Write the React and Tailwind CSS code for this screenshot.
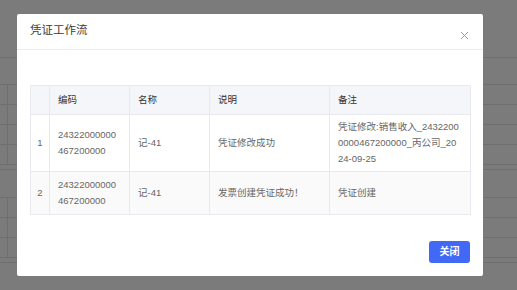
import React from "react";

const font = { fontFamily: '"Liberation Sans", "Noto Sans CJK SC", sans-serif' };

function BgRow({ h, split }) {
  return (
    <div className={`flex border-t border-[#6f6f72] ${h}`}>
      {split ? <div className="w-[8px] border-r border-[#6f6f72]" /> : null}
    </div>
  );
}

export default function App() {
  return (
    <div className="relative w-[517px] h-[290px] overflow-hidden bg-[#7b7b7b]" style={font}>
      {/* underlying page (dimmed) */}
      <div className="flex flex-col">
        <div className="h-[57px]" />
        <BgRow h="h-[27px]" />
        <BgRow h="h-[20px]" split />
        <BgRow h="h-[20px]" split />
        <BgRow h="h-[20px]" split />
        <BgRow h="h-[20px]" split />
        <BgRow h="h-[5px]" />
        <BgRow h="h-[28px]" />
        <BgRow h="h-[20px]" split />
        <BgRow h="h-[20px]" split />
        <BgRow h="h-[20px]" split />
        <BgRow h="h-[5px]" />
        <BgRow h="h-[28px]" />
      </div>

      {/* modal */}
      <div className="absolute left-[17px] top-[14px] w-[466px] h-[262px] bg-white rounded-[2px] flex flex-col">
        <div className="h-[36px] shrink-0 border-b border-[#ebecf2] flex items-center justify-between pl-[13px] pr-[13px]">
          <span className="text-[11.5px] text-[#3a3a3a] leading-none -mt-[1px]">凭证工作流</span>
          <svg width="9" height="9" viewBox="0 0 9 9" className="mt-[8px] mr-[1px]">
            <path d="M1 1 L8 8 M8 1 L1 8" stroke="#9a9aa0" strokeWidth="1" />
          </svg>
        </div>
        <div className="px-[13px] pt-[35px]">
          <table className="table-fixed border-collapse w-[440px] text-[9.5px] leading-[16px]">
            <colgroup>
              <col className="w-[19px]" />
              <col className="w-[80px]" />
              <col className="w-[80px]" />
              <col className="w-[120px]" />
              <col className="w-[141px]" />
            </colgroup>
            <thead>
              <tr className="bg-[#f5f6fa] h-[29px] text-[#333]">
                <th className="border border-[#e8eaf0]" />
                <th className="border border-[#e8eaf0] text-left font-normal px-[8px]">编码</th>
                <th className="border border-[#e8eaf0] text-left font-normal px-[8px]">名称</th>
                <th className="border border-[#e8eaf0] text-left font-normal px-[8px]">说明</th>
                <th className="border border-[#e8eaf0] text-left font-normal px-[8px]">备注</th>
              </tr>
            </thead>
            <tbody className="text-[#666]">
              <tr className="h-[57px]">
                <td className="border border-[#e8eaf0] text-center">1</td>
                <td className="border border-[#e8eaf0] px-[8px] whitespace-nowrap">
                  <div>24322000000</div>
                  <div>467200000</div>
                </td>
                <td className="border border-[#e8eaf0] px-[8px]">记-41</td>
                <td className="border border-[#e8eaf0] px-[8px]">凭证修改成功</td>
                <td className="border border-[#e8eaf0] px-[8px] py-[4px] whitespace-nowrap">
                  <div>凭证修改:销售收入_2432200</div>
                  <div>0000467200000_丙公司_20</div>
                  <div>24-09-25</div>
                </td>
              </tr>
              <tr className="h-[43px] bg-[#fafafa]">
                <td className="border border-[#e8eaf0] text-center">2</td>
                <td className="border border-[#e8eaf0] px-[8px] whitespace-nowrap">
                  <div>24322000000</div>
                  <div>467200000</div>
                </td>
                <td className="border border-[#e8eaf0] px-[8px]">记-41</td>
                <td className="border border-[#e8eaf0] px-[8px]">发票创建凭证成功！</td>
                <td className="border border-[#e8eaf0] px-[8px]">凭证创建</td>
              </tr>
            </tbody>
          </table>
        </div>
        <div className="flex justify-end px-[13px] pt-[26px]">
          <button className="w-[41px] h-[22px] rounded-[3px] bg-[#4169f5] text-white text-[10px] font-bold leading-none">
            关闭
          </button>
        </div>
      </div>
    </div>
  );
}
